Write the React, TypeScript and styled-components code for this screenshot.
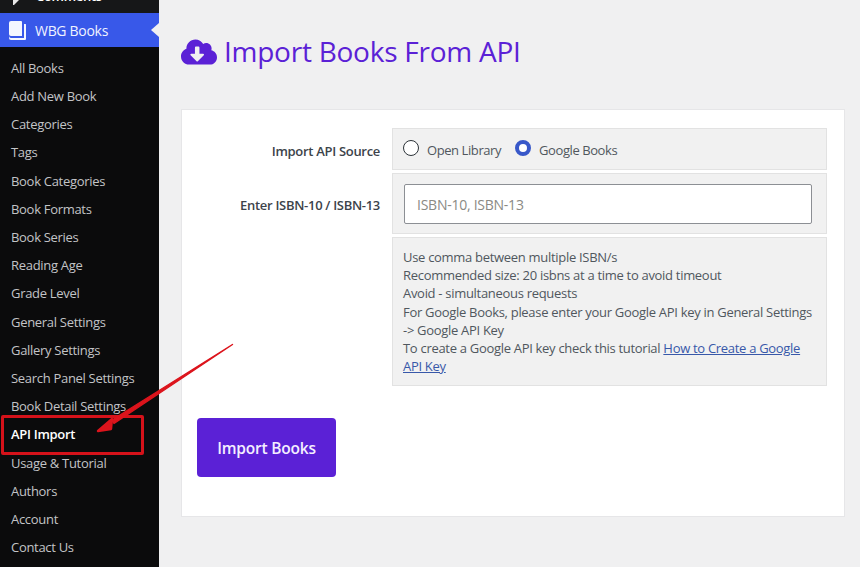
import React from "react";
import styled, { createGlobalStyle } from "styled-components";
import { FaCloudDownloadAlt } from "react-icons/fa";

const Global = createGlobalStyle`
  html, body { margin: 0; padding: 0; height: 567px; overflow: hidden; background: #f0f0f1; }
  * { box-sizing: border-box; }
`;

const Page = styled.div`
  position: relative;
  display: grid;
  grid-template-columns: 159px 1fr;
  width: 860px;
  height: 567px;
  overflow: hidden;
  font-family: "Open Sans", "Noto Sans", sans-serif;
  letter-spacing: -0.3px;
`;

const Sidebar = styled.nav`
  background: #0b0b0c;
  display: flex;
  flex-direction: column;
  overflow: hidden;
`;

const ClippedItem = styled.div`
  height: 13px;
  background: #161718;
  color: #fff;
  display: flex;
  align-items: flex-start;
  gap: 13px;
  padding-left: 13px;
  font-size: 13px;
  line-height: 13px;
  overflow: hidden;
  & > span { display: block; transform: translateY(-10px); font-weight: 600; }
`;

const ActiveItem = styled.div`
  position: relative;
  height: 34px;
  background: #3858e9;
  color: #f0f3ff;
  display: flex;
  align-items: center;
  gap: 9px;
  padding-left: 9px;
  font-size: 14px;
  &::after {
    content: "";
    position: absolute;
    right: 0;
    top: 10px;
    border: 7px solid transparent;
    border-left: 0;
    border-right: 8px solid #f0f0f1;
  }
`;

const SubMenu = styled.ul`
  list-style: none;
  margin: 0;
  padding: 6.8px 0 0;
`;

const SubItem = styled.li<{ $active?: boolean }>`
  height: 28.2px;
  padding-left: 11px;
  display: flex;
  align-items: center;
  font-size: 13px;
  white-space: nowrap;
  color: ${(p) => (p.$active ? "#fff" : "#c3c4c7")};
  font-weight: ${(p) => (p.$active ? 600 : 400)};
`;

const Main = styled.main`
  display: flex;
  flex-direction: column;
  padding: 32px 15px 0 22px;
`;

const Title = styled.h1`
  display: flex;
  align-items: center;
  gap: 7px;
  margin: 0 0 38px;
  height: 39px;
  color: #5b21d6;
  font-size: 28px;
  font-weight: 500;
  line-height: 39px;
  letter-spacing: -0.25px;
  & > svg { width: 36px; height: 36px; flex: none; }
`;

const Card = styled.section`
  width: 664px;
  height: 408px;
  background: #fff;
  border: 1px solid #e6e6e8;
  padding: 18px 17px 0 15px;
`;

const FormGrid = styled.div`
  display: grid;
  grid-template-columns: 183px 435px;
  column-gap: 12px;
  row-gap: 3px;
`;

const Label = styled.div<{ $h: number }>`
  height: ${(p) => p.$h}px;
  padding: 3px 0 0;
  display: flex;
  align-items: center;
  justify-content: flex-end;
  font-size: 13px;
  font-weight: 600;
  color: #3c434a;
  white-space: nowrap;
`;

const Cell = styled.div`
  background: #f1f1f1;
  border: 1px solid #e2e2e2;
`;

const RadioCell = styled(Cell)`
  height: 42px;
  display: flex;
  align-items: center;
  padding: 0 0 2px 10px;
  font-size: 13px;
  letter-spacing: -0.42px;
  color: #50575e;
`;

const RadioMark = styled.span<{ $on?: boolean }>`
  width: 16px;
  height: 16px;
  border-radius: 50%;
  flex: none;
  margin-right: 8px;
  background: #fff;
  border: ${(p) => (p.$on ? "4px solid #3858c9" : "1px solid #2c3338")};
`;

const RadioText = styled.span`
  margin-right: 14px;
  position: relative;
  top: 2px;
`;

const InputCell = styled(Cell)`
  height: 61px;
  padding: 10px 14px 0 11px;
`;

const Input = styled.input`
  display: block;
  width: 100%;
  height: 40px;
  padding: 0 12px;
  background: #fff;
  border: 1px solid #8c8f94;
  border-radius: 2px;
  font: 400 14px "Open Sans", "Noto Sans", sans-serif;
  letter-spacing: -0.25px;
  &::placeholder { color: #8a8a84; opacity: 1; }
`;

const NoteCell = styled(Cell)`
  grid-column: 2;
  height: 149px;
  padding: 10px 10px 0 10px;
  font-size: 13px;
  letter-spacing: -0.3px;
  line-height: 18.2px;
  color: #50575e;
  & a { color: #3858a9; text-decoration: underline; }
`;

const ImportButton = styled.button`
  display: block;
  margin-top: 32px;
  width: 139px;
  height: 59px;
  border: 0;
  border-radius: 4px;
  background: #5b21d6;
  color: #f4efff;
  font: 600 15.5px "Open Sans", "Noto Sans", sans-serif;
  letter-spacing: -0.2px;
`;

const Highlight = styled.div`
  position: absolute;
  left: 1px;
  top: 415px;
  width: 143px;
  height: 40px;
  border: 3px solid #d5121a;
  border-radius: 2px;
  pointer-events: none;
`;

const Arrow = styled.svg`
  position: absolute;
  left: 90px;
  top: 335px;
  width: 150px;
  height: 105px;
  pointer-events: none;
`;

const items = [
  "All Books", "Add New Book", "Categories", "Tags", "Book Categories", "Book Formats",
  "Book Series", "Reading Age", "Grade Level", "General Settings", "Gallery Settings",
  "Search Panel Settings", "Book Detail Settings", "API Import", "Usage & Tutorial",
  "Authors", "Account", "Contact Us",
];

export default function App() {
  return (
    <Page>
      <Global />
      <Sidebar>
        <ClippedItem>
          <svg width="10" height="13" viewBox="0 0 10 13"><path d="M0 0h6L1 5H0z" fill="#e8e8e8" /></svg>
          <span>Comments</span>
        </ClippedItem>
        <ActiveItem>
          <svg width="17" height="19" viewBox="0 0 17 19">
            <path d="M2 0h10a1 1 0 0 1 1 1v14H2a2 2 0 0 1-2-2V2a2 2 0 0 1 2-2z" fill="#f4f6ff" />
            <path d="M15 3h1.5a.5.5 0 0 1 .5.5V18a1 1 0 0 1-1 1H2a2 2 0 0 1-2-2v-2a2 2 0 0 0 2 2h13z" fill="#f4f6ff" />
          </svg>
          WBG Books
        </ActiveItem>
        <SubMenu>
          {items.map((t) => (
            <SubItem key={t} $active={t === "API Import"}>{t}</SubItem>
          ))}
        </SubMenu>
      </Sidebar>
      <Main>
        <Title>
          <FaCloudDownloadAlt />
          Import Books From API
        </Title>
        <Card>
          <FormGrid>
            <Label $h={42}>Import API Source</Label>
            <RadioCell>
              <RadioMark />
              <RadioText>Open Library</RadioText>
              <RadioMark $on />
              <RadioText>Google Books</RadioText>
            </RadioCell>
            <Label $h={61}>Enter ISBN-10 / ISBN-13</Label>
            <InputCell>
              <Input placeholder="ISBN-10, ISBN-13" />
            </InputCell>
            <NoteCell>
              Use comma between multiple ISBN/s<br />
              Recommended size: 20 isbns at a time to avoid timeout<br />
              Avoid - simultaneous requests<br />
              For Google Books, please enter your Google API key in General Settings -&gt; Google API Key<br />
              To create a Google API key check this tutorial <a href="#">How to Create a Google API Key</a>
            </NoteCell>
          </FormGrid>
          <ImportButton>Import Books</ImportButton>
        </Card>
      </Main>
      <Highlight />
      <Arrow viewBox="0 0 150 105">
        <path d="M142.5 9.5 L22 85 L24 88.5 Z" fill="#dc141c" stroke="#dc141c" strokeWidth="1.4" strokeLinejoin="round" />
        <path d="M8 96 L22 84 L21 94 Z" fill="#dc141c" stroke="#dc141c" strokeWidth="2.4" strokeLinejoin="round" />
      </Arrow>
    </Page>
  );
}
